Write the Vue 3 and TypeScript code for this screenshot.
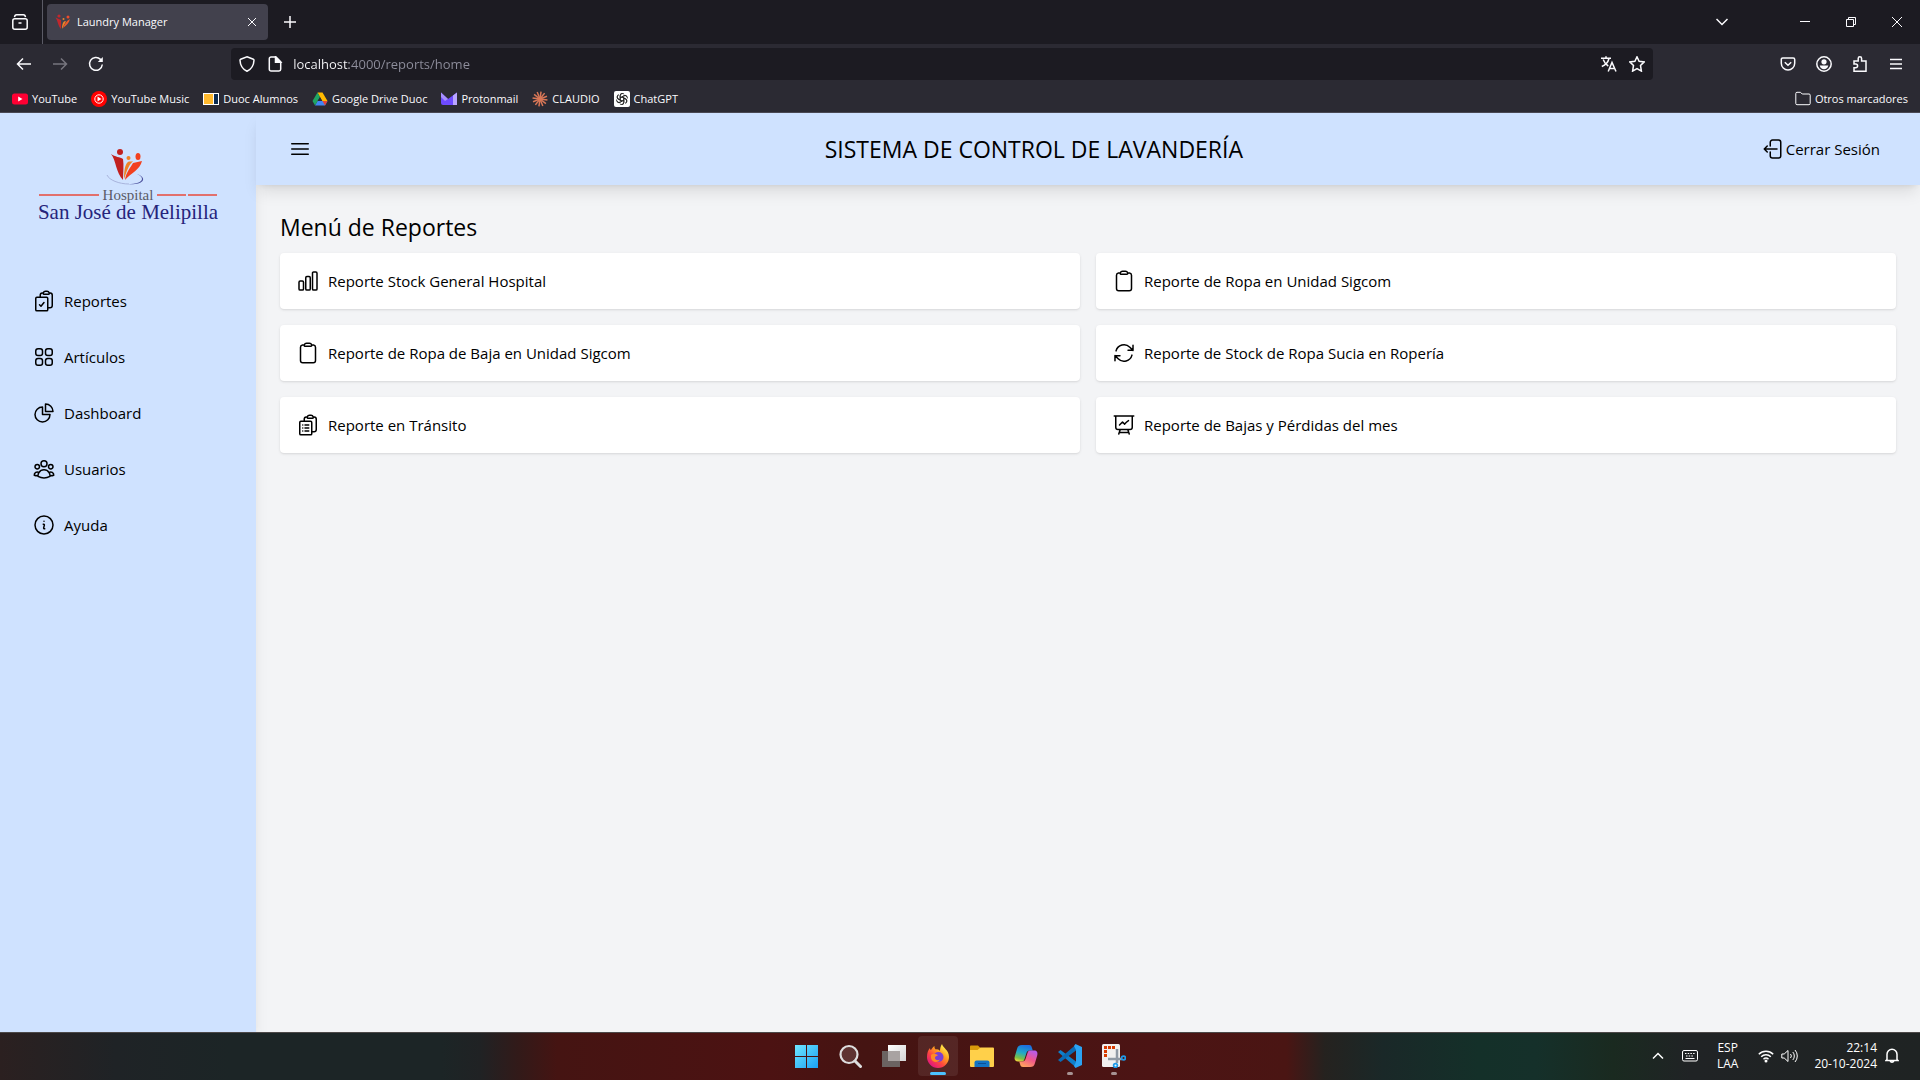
<script setup lang="ts">
import { ref } from 'vue'

interface Entry {
  label: string
  paths: string[]
}

const clipboard =
  'M15.666 3.888A2.25 2.25 0 0 0 13.5 2.25h-3c-1.03 0-1.9.693-2.166 1.638m7.332 0c.055.194.084.4.084.612v0a.75.75 0 0 1-.75.75H9a.75.75 0 0 1-.75-.75v0c0-.212.03-.418.084-.612m7.332 0c.646.049 1.288.11 1.927.184 1.1.128 1.907 1.077 1.907 2.185V19.5a2.25 2.25 0 0 1-2.25 2.25H6.75A2.25 2.25 0 0 1 4.5 19.5V6.257c0-1.108.806-2.057 1.907-2.185a48.208 48.208 0 0 1 1.927-.184'

const navigation: Entry[] = [
  {
    label: 'Reportes',
    paths: [
      'M11.35 3.836c-.065.21-.1.433-.1.664 0 .414.336.75.75.75h4.5a.75.75 0 0 0 .75-.75 2.25 2.25 0 0 0-.1-.664m-5.8 0A2.251 2.251 0 0 1 13.5 2.25H15c1.012 0 1.867.668 2.15 1.586m-5.8 0c-.376.023-.75.05-1.124.08C9.095 4.01 8.25 4.973 8.25 6.108V8.25m8.9-4.414c.376.023.75.05 1.124.08 1.131.094 1.976 1.057 1.976 2.192V16.5A2.25 2.25 0 0 1 18 18.75h-2.25m-7.5-10.5H4.875c-.621 0-1.125.504-1.125 1.125v11.25c0 .621.504 1.125 1.125 1.125h9.75c.621 0 1.125-.504 1.125-1.125V18.75m-7.5-10.5h6.375c.621 0 1.125.504 1.125 1.125v9.375m-8.25-3 1.5 1.5 3-3.75',
    ],
  },
  {
    label: 'Artículos',
    paths: [
      'M3.75 6A2.25 2.25 0 0 1 6 3.75h2.25A2.25 2.25 0 0 1 10.5 6v2.25a2.25 2.25 0 0 1-2.25 2.25H6a2.25 2.25 0 0 1-2.25-2.25V6ZM3.75 15.75A2.25 2.25 0 0 1 6 13.5h2.25a2.25 2.25 0 0 1 2.25 2.25V18a2.25 2.25 0 0 1-2.25 2.25H6A2.25 2.25 0 0 1 3.75 18v-2.25ZM13.5 6a2.25 2.25 0 0 1 2.25-2.25H18A2.25 2.25 0 0 1 20.25 6v2.25A2.25 2.25 0 0 1 18 10.5h-2.25a2.25 2.25 0 0 1-2.25-2.25V6ZM13.5 15.75a2.25 2.25 0 0 1 2.25-2.25H18a2.25 2.25 0 0 1 2.25 2.25V18A2.25 2.25 0 0 1 18 20.25h-2.25A2.25 2.25 0 0 1 13.5 18v-2.25Z',
    ],
  },
  {
    label: 'Dashboard',
    paths: ['M10.5 6a7.5 7.5 0 1 0 7.5 7.5h-7.5V6Z', 'M13.5 10.5H21A7.5 7.5 0 0 0 13.5 3v7.5Z'],
  },
  {
    label: 'Usuarios',
    paths: [
      'M18 18.72a9.094 9.094 0 0 0 3.741-.479 3 3 0 0 0-4.682-2.72m.94 3.198.001.031c0 .225-.012.447-.037.666A11.944 11.944 0 0 1 12 21c-2.17 0-4.207-.576-5.963-1.584A6.062 6.062 0 0 1 6 18.719m12 0a5.971 5.971 0 0 0-.941-3.197m0 0A5.995 5.995 0 0 0 12 12.75a5.995 5.995 0 0 0-5.058 2.772m0 0a3 3 0 0 0-4.681 2.72 8.986 8.986 0 0 0 3.74.477m.94-3.197a5.971 5.971 0 0 0-.94 3.197M15 6.75a3 3 0 1 1-6 0 3 3 0 0 1 6 0Zm6 3a2.25 2.25 0 1 1-4.5 0 2.25 2.25 0 0 1 4.5 0Zm-13.5 0a2.25 2.25 0 1 1-4.5 0 2.25 2.25 0 0 1 4.5 0Z',
    ],
  },
  {
    label: 'Ayuda',
    paths: [
      'm11.25 11.25.041-.02a.75.75 0 0 1 1.063.852l-.708 2.836a.75.75 0 0 0 1.063.853l.041-.021M21 12a9 9 0 1 1-18 0 9 9 0 0 1 18 0Zm-9-3.75h.008v.008H12V8.25Z',
    ],
  },
]

const reports: Entry[] = [
  {
    label: 'Reporte Stock General Hospital',
    paths: [
      'M3 13.125C3 12.504 3.504 12 4.125 12h2.25c.621 0 1.125.504 1.125 1.125v6.75C7.5 20.496 6.996 21 6.375 21h-2.25A1.125 1.125 0 0 1 3 19.875v-6.75ZM9.75 8.625c0-.621.504-1.125 1.125-1.125h2.25c.621 0 1.125.504 1.125 1.125v11.25c0 .621-.504 1.125-1.125 1.125h-2.25a1.125 1.125 0 0 1-1.125-1.125V8.625ZM16.5 4.125c0-.621.504-1.125 1.125-1.125h2.25C20.496 3 21 3.504 21 4.125v15.75c0 .621-.504 1.125-1.125 1.125h-2.25a1.125 1.125 0 0 1-1.125-1.125V4.125Z',
    ],
  },
  { label: 'Reporte de Ropa en Unidad Sigcom', paths: [clipboard] },
  { label: 'Reporte de Ropa de Baja en Unidad Sigcom', paths: [clipboard] },
  {
    label: 'Reporte de Stock de Ropa Sucia en Ropería',
    paths: [
      'M16.023 9.348h4.992v-.001M2.985 19.644v-4.992m0 0h4.992m-4.993 0 3.181 3.183a8.25 8.25 0 0 0 13.803-3.7M4.031 9.865a8.25 8.25 0 0 1 13.803-3.7l3.181 3.182m0-4.991v4.99',
    ],
  },
  {
    label: 'Reporte en Tránsito',
    paths: [
      'M9 12h3.75M9 15h3.75M9 18h3.75m3 .75H18a2.25 2.25 0 0 0 2.25-2.25V6.108c0-1.135-.845-2.098-1.976-2.192a48.424 48.424 0 0 0-1.123-.08m-5.801 0c-.065.21-.1.433-.1.664 0 .414.336.75.75.75h4.5a.75.75 0 0 0 .75-.75 2.25 2.25 0 0 0-.1-.664m-5.8 0A2.251 2.251 0 0 1 13.5 2.25H15c1.012 0 1.867.668 2.15 1.586m-5.8 0c-.376.023-.75.05-1.124.08C9.095 4.01 8.25 4.973 8.25 6.108V8.25m0 0H4.875c-.621 0-1.125.504-1.125 1.125v11.25c0 .621.504 1.125 1.125 1.125h9.75c.621 0 1.125-.504 1.125-1.125V9.375c0-.621-.504-1.125-1.125-1.125H8.25ZM6.75 12h.008v.008H6.75V12Zm0 3h.008v.008H6.75V15Zm0 3h.008v.008H6.75V18Z',
    ],
  },
  {
    label: 'Reporte de Bajas y Pérdidas del mes',
    paths: [
      'M3.75 3v11.25A2.25 2.25 0 0 0 6 16.5h2.25M3.75 3h-1.5m1.5 0h16.5m0 0h1.5m-1.5 0v11.25A2.25 2.25 0 0 1 18 16.5h-2.25m-7.5 0h7.5m-7.5 0-1 3m8.5-3 1 3m0 0 .5 1.5m-.5-1.5h-9.5m0 0-.5 1.5m.75-9 3-3 2.148 2.148A12.061 12.061 0 0 1 16.5 7.605',
    ],
  },
]

const address = ref('localhost:4000/reports/home')
const rays = Array.from({ length: 12 }, (_, i) => i * 30)
const petals = [0, 60, 120, 180, 240, 300]
</script>

<template>
  <div class="screen">
    <div class="tabstrip">
      <button class="recent" aria-label="Vista de Firefox">
        <svg width="16" height="16" viewBox="0 0 16 16" class="line">
          <path d="M2.500 3.200C2.700 1.600 3.400.8 4.600.8h6.800c1.200 0 1.900.8 2.100 2.400M6.500 9h3" />
          <rect x=".8" y="4.800" width="14.400" height="10.400" rx="2" />
        </svg>
      </button>
      <div class="tab">
        <svg width="16" height="16" viewBox="0 0 16 16">
          <path d="M.5 3.500 6 6v9C3 12 3 7 .5 3.500Z" fill="#c1272d" />
          <circle cx="4" cy="2" r="1.600" fill="#c1272d" />
          <path d="M7 15c0-4 .5-7 3-8l1 .5C9.500 10 8.500 12 7 15Z" fill="#f08326" />
          <path d="M8 14c1-3 3-7 7-9-1 4-3.500 6-7 9Z" fill="#ee5a2b" />
          <circle cx="8.500" cy="5" r="1" fill="#f08326" />
          <circle cx="13" cy="3" r="1.500" fill="#ee4b2b" />
        </svg>
        <span class="tab-title">Laundry Manager</span>
        <button class="tab-close" aria-label="Cerrar pestaña">
          <svg width="10" height="10" viewBox="0 0 10 10" class="line thin"><path d="m1 1 8 8m0-8-8 8" /></svg>
        </button>
      </div>
      <button class="square" aria-label="Nueva pestaña">
        <svg width="12" height="12" viewBox="0 0 12 12" class="line"><path d="M6 0v12M0 6h12" /></svg>
      </button>
      <div class="window-controls">
        <button class="list-tabs" aria-label="Listar pestañas">
          <svg width="12" height="8" viewBox="0 0 12 8" class="line"><path d="m.5 1 5.500 5.500L11.500 1" /></svg>
        </button>
        <button class="caption" aria-label="Minimizar">
          <svg width="10" height="10" viewBox="0 0 10 10" class="line thin"><path d="M0 4.500h10" /></svg>
        </button>
        <button class="caption" aria-label="Restaurar">
          <svg width="10" height="10" viewBox="0 0 10 10" class="line thin">
            <path d="M.5 2.500h7v7h-7zM2.500 2.500v-2h7v7h-2" />
          </svg>
        </button>
        <button class="caption" aria-label="Cerrar">
          <svg width="10" height="10" viewBox="0 0 10 10" class="line thin"><path d="m0 0 10 10M10 0 0 10" /></svg>
        </button>
      </div>
    </div>

    <div class="toolbar">
      <div class="tool-group">
        <button class="square" aria-label="Atrás">
          <svg width="16" height="16" viewBox="0 0 16 16" class="line"><path d="M15 8H1.500M7 2.500 1.500 8 7 13.500" /></svg>
        </button>
        <button class="square" aria-label="Adelante" disabled>
          <svg width="16" height="16" viewBox="0 0 16 16" class="line"><path d="M1 8h13.500M9 2.500 14.500 8 9 13.500" /></svg>
        </button>
        <button class="square" aria-label="Recargar">
          <svg width="16" height="16" viewBox="0 0 16 16" class="line">
            <path d="M14.300 8.500A6.400 6.400 0 1 1 12.500 3.400l1 1" />
            <path d="M14.800 1v5h-5Z" fill="currentColor" stroke="none" />
          </svg>
        </button>
      </div>
      <div class="spring"></div>
      <div class="urlbar">
        <svg width="16" height="16" viewBox="0 0 16 16" class="line">
          <path d="M8 .8 14.400 3.200c.5.2.6.5.600 1-.2 4.800-2.400 8.800-7 11-4.600-2.200-6.800-6.200-7-11 0-.5.100-.8.600-1Z" />
        </svg>
        <svg width="16" height="16" viewBox="0 0 16 16" class="line page-icon">
          <path d="M9 1H4a1.700 1.700 0 0 0-1.700 1.700v10.600A1.700 1.700 0 0 0 4 15h8a1.700 1.700 0 0 0 1.700-1.700V5.700Z" />
          <path d="M8.500 1v5.200h5.200Z" fill="currentColor" />
        </svg>
        <input v-model="address" class="address" type="text" aria-label="Dirección" spellcheck="false" />
        <button class="url-action" aria-label="Traducir esta página">
          <svg width="16" height="16" viewBox="0 0 16 16" class="line">
            <path d="M0 2.300h10M5 .2v2M8 2.500C7 6.500 4.500 9 .8 10.500M2.200 3.500C3.300 6.500 5 8.700 7.300 10" />
            <path d="m7.200 15.500 3.800-9 4 9M8.600 12.500h5" />
          </svg>
        </button>
        <button class="url-action" aria-label="Añadir a marcadores">
          <svg width="16" height="16" viewBox="0 0 16 16" class="line">
            <path d="m8 .8 2.100 4.500 5.100.6-3.700 3.500.9 5.700L8 12.500l-4.400 2.600.9-5.700L.8 5.900l5.100-.6Z" />
          </svg>
        </button>
      </div>
      <div class="spring"></div>
      <div class="tool-group">
        <button class="square" aria-label="Pocket">
          <svg width="16" height="16" viewBox="0 0 16 16" class="line">
            <path d="M2.800 2h10.400c1 0 1.500.5 1.500 1.500v3.800a6.700 6.700 0 0 1-13.400 0V3.500C1.300 2.500 1.800 2 2.800 2Z" />
            <path d="m4.800 6.300 3.200 3 3.200-3" />
          </svg>
        </button>
        <button class="square" aria-label="Cuenta">
          <svg width="16" height="16" viewBox="0 0 16 16" class="line">
            <circle cx="8" cy="8" r="7.200" />
            <circle cx="8" cy="5.800" r="2.600" fill="currentColor" stroke="none" />
            <path d="M3.700 9.500h8.600c-.6 2.500-2.200 3.700-4.300 3.700s-3.700-1.200-4.300-3.700Z" fill="currentColor" stroke="none" />
          </svg>
        </button>
        <button class="square" aria-label="Extensiones">
          <svg width="16" height="16" viewBox="0 0 16 16" class="line">
            <path
              d="M2 8V5h4.200V2.500a1.700 1.700 0 0 1 3.400 0V5H14v10.200H2v-3.400h1.700a1.900 1.900 0 0 0 0-3.800Z"
            />
          </svg>
        </button>
        <button class="square" aria-label="Menú de la aplicación">
          <svg width="12" height="12" viewBox="0 0 12 12" class="line">
            <path d="M0 1.500h12M0 6h12M0 10.500h12" />
          </svg>
        </button>
      </div>
    </div>

    <nav class="bookmarks" aria-label="Marcadores">
      <a href="#">
        <svg width="16" height="16" viewBox="0 0 16 16">
          <rect y="2.500" width="16" height="11" rx="2.500" fill="#ff0033" />
          <path d="m6.200 5.500 4.300 2.500-4.300 2.500Z" fill="#fff" />
        </svg>
        YouTube
      </a>
      <a href="#">
        <svg width="16" height="16" viewBox="0 0 16 16">
          <circle cx="8" cy="8" r="8" fill="#f00" />
          <circle cx="8" cy="8" r="4.200" fill="none" stroke="#fff" />
          <path d="m6.500 5.500 4 2.500-4 2.500Z" fill="#fff" />
        </svg>
        YouTube Music
      </a>
      <a href="#">
        <svg width="16" height="16" viewBox="0 0 16 16">
          <path d="M0 2h16v12H0z" fill="#fff" />
          <path d="M1 3h9v10H1z" fill="#ffb92e" />
          <path d="M11 3h4v10h-4z" fill="#0b2c52" />
        </svg>
        Duoc Alumnos
      </a>
      <a href="#">
        <svg width="16" height="16" viewBox="0 0 16 16">
          <path d="M10.500 1.500 15.500 10H10L5.500 1.500Z" fill="#ffba00" />
          <path d="M15.500 10 13 14.500H3L5.500 10Z" fill="#4285f4" />
          <path d="M.5 10 3 14.500 8 6 5.500 1.500Z" fill="#1fa463" />
          <path d="M15.500 10 13 14.500 10.500 10Z" fill="#ea4335" />
          <path d="M8 6 10.300 10H5.700Z" fill="#2b2a33" />
        </svg>
        Google Drive Duoc
      </a>
      <a href="#">
        <svg width="16" height="16" viewBox="0 0 16 16">
          <path d="M0 1.500 7 8 16 1.500V14H2a2 2 0 0 1-2-2Z" fill="#6d4aff" />
          <path d="M16 1.500V14h-4V4.500Z" fill="#b9a5ff" />
          <path d="M0 1.500 7 8 4 10 0 6Z" fill="#a78fff" />
        </svg>
        Protonmail
      </a>
      <a href="#">
        <svg width="16" height="16" viewBox="0 0 16 16" stroke="#d97757" stroke-width="1.500">
          <path v-for="angle in rays" :key="angle" d="M8 8V.5" :transform="`rotate(${angle + 8} 8 8)`" />
        </svg>
        CLAUDIO
      </a>
      <a href="#">
        <svg width="16" height="16" viewBox="0 0 16 16">
          <rect width="16" height="16" rx="2" fill="#fff" />
          <g fill="none" stroke="#222" stroke-width=".9">
            <path
              v-for="angle in petals"
              :key="angle"
              d="M6.200 9V4.700a2.300 2.300 0 0 1 4-1.500M6.200 6.900 9.800 4.800a2.300 2.300 0 0 1 3 .6"
              :transform="`rotate(${angle} 8 8)`"
            />
          </g>
        </svg>
        ChatGPT
      </a>
      <a href="#" class="others">
        <svg width="16" height="16" viewBox="0 0 16 16" class="line thin">
          <path d="M.8 12.500v-10c0-.8.400-1.200 1.200-1.200h3.500L7.200 3H14c.8 0 1.200.4 1.200 1.200v8.300c0 .8-.4 1.200-1.200 1.200H2c-.8 0-1.200-.4-1.200-1.200Z" />
        </svg>
        Otros marcadores
      </a>
    </nav>

    <div class="app">
      <aside class="sidebar">
        <div class="logo">
          <svg class="emblem" width="40" height="38" viewBox="0 0 40 38">
            <path d="M1 27c2 5 12 9 22 9" fill="none" stroke="#a9b4dc" stroke-width="1" />
            <path d="M31 26c9 3 8 9-2 10-4 .4-7 0-7 0 8 0 14-2 14-5 0-2-2-4-5-5Z" fill="#4a4f9c" />
            <circle cx="14" cy="4" r="3" fill="#c1201f" />
            <path d="M5 6c4 3 9 3 12 5 1 6 0 14 0 21C10 25 10 12 5 6Z" fill="#c1201f" />
            <circle cx="22.500" cy="10" r="2" fill="#f08326" />
            <path d="M18 31c0-8 1-15 4-17 1-1 3 0 5-1-5 5-6 10-9 18Z" fill="#f08326" />
            <ellipse cx="32" cy="8.500" rx="2.500" ry="3.500" fill="#f2401f" />
            <path d="M19 32c1-8 6-13 8-17 3-1 6-1 9-2-2 9-11 12-17 19Z" fill="#f2401f" />
          </svg>
          <div class="logo-line">
            <i></i>
            <span>Hospital</span>
            <i class="split"></i>
          </div>
          <div class="logo-name">San José de Melipilla</div>
        </div>
        <nav class="menu" aria-label="Principal">
          <a v-for="item in navigation" :key="item.label" href="#">
            <svg width="24" height="24" viewBox="0 0 24 24" class="outline">
              <path v-for="d in item.paths" :key="d" :d="d" />
            </svg>
            {{ item.label }}
          </a>
        </nav>
      </aside>

      <div class="content">
        <header class="header">
          <button class="burger" aria-label="Contraer menú">
            <svg width="24" height="24" viewBox="0 0 24 24" class="outline">
              <path d="M3.750 6.750h16.500M3.750 12h16.500m-16.500 5.250h16.500" />
            </svg>
          </button>
          <h1>SISTEMA DE CONTROL DE LAVANDERÍA</h1>
          <button class="logout">
            <svg width="24" height="24" viewBox="0 0 24 24" class="outline">
              <path
                d="M8.250 9V5.250A2.250 2.250 0 0 1 10.500 3h6a2.250 2.250 0 0 1 2.250 2.250v13.500A2.250 2.250 0 0 1 16.500 21h-6a2.250 2.250 0 0 1-2.250-2.250V15m-3 0-3-3m0 0 3-3m-3 3H15"
              />
            </svg>
            Cerrar Sesión
          </button>
        </header>
        <main class="main">
          <h2>Menú de Reportes</h2>
          <div class="cards">
            <a v-for="report in reports" :key="report.label" href="#" class="card">
              <svg width="24" height="24" viewBox="0 0 24 24" class="outline">
                <path v-for="d in report.paths" :key="d" :d="d" />
              </svg>
              {{ report.label }}
            </a>
          </div>
        </main>
      </div>
    </div>

    <footer class="taskbar">
      <div class="pinned">
        <button aria-label="Inicio">
          <svg width="24" height="24" viewBox="0 0 24 24">
            <defs>
              <linearGradient id="win" x1="0" y1="0" x2="1" y2="1" gradientUnits="objectBoundingBox">
                <stop offset="0" stop-color="#6fe6ff" />
                <stop offset="1" stop-color="#1aa0f5" />
              </linearGradient>
            </defs>
            <path d="M1 1h11v11H1zM13 1h11v11H13zM1 13h11v11H1zM13 13h11v11H13z" fill="url(#win)" />
          </svg>
        </button>
        <button aria-label="Buscar">
          <svg width="24" height="24" viewBox="0 0 24 24" fill="none" stroke="#dedede">
            <circle cx="11" cy="10.500" r="8.500" stroke-width="2.200" fill="#ffffff22" />
            <path d="m17 17 5.500 5.500" stroke-width="3" stroke-linecap="round" />
          </svg>
        </button>
        <button aria-label="Vista de tareas">
          <svg width="24" height="24" viewBox="0 0 24 24">
            <defs>
              <linearGradient id="tv" x1="0" y1="0" x2="1" y2="1">
                <stop offset="0" stop-color="#fff" />
                <stop offset="1" stop-color="#d4d4d4" />
              </linearGradient>
            </defs>
            <path d="M6 1h18v16H6z" fill="url(#tv)" />
            <path d="M0 7h18v16H0z" fill="#6b6361" />
            <path d="M6 7h12v10H6z" fill="#a9a3a2" />
          </svg>
        </button>
        <button class="active" aria-label="Firefox">
          <svg width="24" height="24" viewBox="0 0 24 24">
            <defs>
              <linearGradient id="fx" x1=".85" y1=".1" x2=".2" y2=".9">
                <stop offset="0" stop-color="#fff44f" />
                <stop offset=".35" stop-color="#ffa020" />
                <stop offset=".65" stop-color="#ff4a3d" />
                <stop offset="1" stop-color="#e3187b" />
              </linearGradient>
            </defs>
            <path
              d="M16 0c1 4 7 6 7 13a11 11 0 0 1-22 0c0-4 1-7 3-9 0 1 .5 2 1 2 1-2 2-3 3.500-4-.3 1.500.5 3 1.500 3.500 2-.5 3 .5 4 1.500C14 5 14.500 2 16 0Z"
              fill="url(#fx)"
            />
            <circle cx="12.500" cy="13" r="5" fill="#7b3fd4" />
            <path d="M5 11c2-2 4-1 7 0-1 1.500-3 1-3 3s3 3 5 1.500c-2 4-8 3-9-1.500Z" fill="#ff8a25" />
          </svg>
        </button>
        <button aria-label="Explorador de archivos">
          <svg width="24" height="24" viewBox="0 0 24 24">
            <path d="M0 2.500C0 2 .5 1.500 1 1.500h7L10.500 4 8 7H0Z" fill="#d99a0b" />
            <path d="M0 6h7.500l3-2.500H23a1 1 0 0 1 1 1V22a1 1 0 0 1-1 1H1a1 1 0 0 1-1-1Z" fill="#ffd04a" />
            <path d="M4.500 23v-4.500a2 2 0 0 1 2-2h11a2 2 0 0 1 2 2V23Z" fill="#1273c4" />
            <path d="M8 19.500h8" stroke="#0b4f96" />
          </svg>
        </button>
        <button aria-label="Copilot">
          <svg width="24" height="24" viewBox="0 0 24 24">
            <defs>
              <linearGradient id="cpa" x1=".5" y1="0" x2=".2" y2="1">
                <stop offset="0" stop-color="#1d6fe0" />
                <stop offset=".45" stop-color="#1fa8c9" />
                <stop offset=".8" stop-color="#7bc043" />
                <stop offset="1" stop-color="#f4d83c" />
              </linearGradient>
              <linearGradient id="cpb" x1=".8" y1="0" x2=".3" y2="1">
                <stop offset="0" stop-color="#b35cf0" />
                <stop offset=".5" stop-color="#f0568c" />
                <stop offset="1" stop-color="#ffa25e" />
              </linearGradient>
            </defs>
            <path d="M8 1h7c2 0 2.500 1 3 3l.8 2.500h-3c-2 0-3 1-3.500 3L10.500 15c-.5 2-1.500 2.500-3 2.500H4c-3 0-4-2-3.200-5L3 5c.9-3 2-4 5-4Z" fill="url(#cpa)" />
            <path d="M16 23H9c-2 0-2.500-1-3-3l-.8-2.500h3c2 0 3-1 3.500-3L13.500 9c.5-2 1.500-2.500 3-2.500H20c3 0 4 2 3.200 5L21 19c-.9 3-2 4-5 4Z" fill="url(#cpb)" />
          </svg>
        </button>
        <button class="running" aria-label="Visual Studio Code">
          <svg width="24" height="24" viewBox="0 0 24 24">
            <path d="m0 8 2.500-2L18 17.500v6L0 8Z" fill="#0f7fca" />
            <path d="m0 16 2.500 2L18 6.500v-6L0 16Z" fill="#0a6bb5" />
            <path d="M17.500 0 24 3v18l-6.500 3L16 22l2-4V6l-2-4Z" fill="#2ba3f2" />
          </svg>
        </button>
        <button class="running" aria-label="Recortes">
          <svg width="24" height="24" viewBox="0 0 24 24">
            <rect width="18" height="23" rx="1.500" fill="#f0f0f0" />
            <path d="M3.500 13V3.500H14" fill="none" stroke="#d83b01" stroke-width="3" stroke-dasharray="3 1" />
            <path d="M15 5v14M6 15h14" stroke="#8f9aa6" stroke-width="2.500" />
            <circle cx="21.500" cy="14" r="1.900" fill="none" stroke="#1e9be9" stroke-width="1.700" />
            <circle cx="13.500" cy="21.500" r="1.900" fill="none" stroke="#1e9be9" stroke-width="1.700" />
          </svg>
        </button>
      </div>
      <div class="tray">
        <button aria-label="Mostrar iconos ocultos">
          <svg width="12" height="8" viewBox="0 0 12 8" class="line"><path d="M1 6.500 6 1.500l5 5" /></svg>
        </button>
        <button class="keyboard" aria-label="Teclado táctil">
          <svg width="16" height="12" viewBox="0 0 16 12" class="line thin">
            <rect x=".5" y=".5" width="15" height="10.500" rx="1.500" />
            <path d="M3 3.500h10M4 6h8" stroke-dasharray="1.500 1.200" />
            <path d="M3.500 8.500h9" />
          </svg>
        </button>
        <button class="lang">ESP<br />LAA</button>
        <button class="status" aria-label="Red y volumen">
          <svg width="16" height="14" viewBox="0 0 16 14" class="line">
            <path d="M.8 5.200a10.200 10.200 0 0 1 14.400 0M3.200 7.800a6.800 6.800 0 0 1 9.600 0M5.500 10.200a3.600 3.600 0 0 1 5 0" />
            <circle cx="8" cy="12" r="1.500" fill="currentColor" stroke="none" />
          </svg>
          <svg width="17" height="14" viewBox="0 0 17 14" class="line thin">
            <path d="M.8 5v4h2.400L7 12.500v-11L3.200 5ZM9.500 5a3 3 0 0 1 0 4M11.800 3a6 6 0 0 1 0 8M14 1a9 9 0 0 1 0 12" />
          </svg>
        </button>
        <button class="clock">22:14<br />20-10-2024</button>
        <button class="bell" aria-label="Notificaciones">
          <svg width="14" height="16" viewBox="0 0 14 16" class="line">
            <path d="M2 11.500V6.200a5 5 0 0 1 10 0v5.300l1 1H1ZM5.200 13a1.900 1.900 0 0 0 3.600 0" />
          </svg>
        </button>
      </div>
    </footer>
  </div>
</template>

<style>
body {
  margin: 0;
}
</style>

<style scoped>
* {
  box-sizing: border-box;
}
.screen {
  display: flex;
  flex-direction: column;
  min-height: 100vh;
  font-family: 'Segoe UI', 'Open Sans', 'Noto Sans', sans-serif;
  font-size: 15px;
  line-height: 24px;
  color: #000;
}
button {
  display: flex;
  align-items: center;
  justify-content: center;
  padding: 0;
  border: 0;
  background: none;
  color: inherit;
  font: inherit;
}
a {
  color: inherit;
  text-decoration: none;
}
svg {
  display: block;
  flex: none;
}
.line {
  fill: none;
  stroke: currentColor;
  stroke-width: 1.5;
}
.thin {
  stroke-width: 1;
}
.outline {
  fill: none;
  stroke: currentColor;
  stroke-width: 1.5;
  stroke-linecap: round;
  stroke-linejoin: round;
}

/* Browser chrome */
.tabstrip,
.toolbar,
.bookmarks {
  display: flex;
  align-items: center;
  color: #fbfbfe;
  font-size: 11px;
  line-height: 16px;
}
.tabstrip {
  height: 44px;
  background: #1c1b22;
}
.recent {
  width: 43px;
  height: 44px;
  padding-right: 2px;
  border-right: 1px solid #5b5b66;
}
.tab {
  display: flex;
  align-items: center;
  gap: 6px;
  width: 221px;
  height: 36px;
  margin: 0 6px 0 4px;
  padding: 0 6px 0 8px;
  border-radius: 4px;
  background: #42414d;
}
.tab-title {
  flex: 1;
}
.tab-close {
  width: 20px;
  height: 20px;
}
.square {
  width: 32px;
  height: 32px;
}
.square:disabled {
  color: #77767f;
}
.window-controls {
  display: flex;
  align-items: center;
  margin-left: auto;
}
.list-tabs {
  width: 32px;
  height: 32px;
  margin-right: 44px;
}
.caption {
  width: 46px;
  height: 44px;
}
.toolbar {
  height: 40px;
  padding: 0 8px;
  background: #2b2a33;
}
.tool-group {
  display: flex;
  gap: 4px;
}
.spring {
  flex: 1 1 2px;
}
.urlbar {
  display: flex;
  flex: 12;
  align-items: center;
  height: 32px;
  padding: 0 8px;
  border-radius: 4px;
  background: #1c1b22;
}
.page-icon {
  margin-left: 12px;
}
.address {
  flex: 1;
  min-width: 0;
  height: 24px;
  margin-left: 10px;
  padding: 0;
  border: 0;
  outline: 0;
  font: 13px/24px 'Segoe UI', 'Open Sans', 'Noto Sans', sans-serif;
  color: #8f8f9d;
  background: linear-gradient(90deg, #fbfbfe 56px, #8f8f9d 56px);
  background-clip: text;
  -webkit-text-fill-color: transparent;
}
.url-action {
  width: 28px;
  height: 28px;
}
.urlbar .url-action:last-child {
  margin-right: -6px;
}
.bookmarks {
  gap: 14px;
  height: 29px;
  padding: 1px 12px 0;
  border-bottom: 1px solid #4a4954;
  background: #2b2a33;
}
.bookmarks a {
  display: flex;
  align-items: center;
  gap: 4px;
  white-space: nowrap;
}
.bookmarks .others {
  margin-left: auto;
}

/* Application */
.app {
  display: flex;
  flex: 1;
  background: #f3f4f6;
}
.sidebar,
.header {
  position: relative;
  background: #cfe2ff;
  box-shadow:
    0 10px 15px -3px rgb(0 0 0 / 10%),
    0 4px 6px -4px rgb(0 0 0 / 10%);
}
.sidebar {
  width: 256px;
  flex: none;
}
.logo {
  display: flex;
  flex-direction: column;
  align-items: center;
  height: 160px;
  padding: 35px 39px 0;
  font-family: 'Liberation Serif', serif;
}
.emblem {
  margin-left: -4px;
}
.logo-line {
  display: flex;
  align-items: center;
  gap: 4px;
  width: 100%;
  font-size: 15px;
  line-height: 18px;
  color: #5a5a66;
}
.logo-line i {
  flex: 1;
  height: 2px;
  background: #e2706c;
}
.logo-line .split {
  background: linear-gradient(90deg, #e2706c 29px, transparent 29px 31px, #e2706c 31px);
}
.logo-name {
  font-size: 21px;
  line-height: 16px;
  white-space: nowrap;
  color: #26247b;
}
.menu a {
  display: flex;
  align-items: center;
  gap: 8px;
  height: 56px;
  padding: 0 32px;
}
.content {
  display: flex;
  flex: 1;
  flex-direction: column;
  min-width: 0;
}
.header {
  display: flex;
  align-items: center;
  justify-content: space-between;
  height: 72px;
  padding: 0 40px 0 32px;
}
.logout {
  padding-left: 6px;
}
h1,
h2 {
  margin: 0;
  font-size: 23px;
  font-weight: 400;
  line-height: 36px;
}
.main {
  padding: 24px;
}
.cards {
  display: grid;
  grid-template-columns: 1fr 1fr;
  gap: 16px;
  margin-top: 8px;
}
.card {
  display: flex;
  align-items: center;
  gap: 8px;
  height: 56px;
  padding: 0 16px;
  border-radius: 4px;
  background: #fff;
  box-shadow:
    0 1px 3px rgb(0 0 0 / 10%),
    0 1px 2px -1px rgb(0 0 0 / 10%);
}

/* Taskbar */
.taskbar {
  position: relative;
  display: grid;
  grid-template-columns: 1fr auto 1fr;
  align-items: center;
  height: 48px;
  padding-bottom: 1px;
  border-top: 1px solid #4c4848;
  background: linear-gradient(
    90deg,
    #2b2020 0%,
    #1f2326 6%,
    #1c2526 12%,
    #1c2526 23%,
    #202224 25%,
    #321a19 27%,
    #451412 29%,
    #4c1212 40%,
    #451412 45%,
    #4c1414 60%,
    #4a1513 67%,
    #25221f 69%,
    #1a2828 72%,
    #143029 77%,
    #15302a 80%,
    #1a2a20 84%,
    #202325 88%,
    #1f2323 100%
  );
  color: #fff;
}
.pinned {
  display: flex;
  grid-column: 2;
  gap: 4px;
}
.pinned button {
  position: relative;
  width: 40px;
  height: 40px;
  border-radius: 4px;
}
.pinned .active {
  background: #ffffff14;
}
.active::after,
.running::after {
  position: absolute;
  bottom: 1px;
  left: 50%;
  width: 16px;
  height: 3px;
  margin-left: -8px;
  border-radius: 2px;
  background: #4cc2ff;
  content: '';
}
.running::after {
  width: 6px;
  margin-left: -3px;
  background: #a79393;
}
.tray {
  display: flex;
  justify-content: flex-end;
  align-items: center;
  padding-right: 21px;
  font-size: 12px;
  line-height: 16px;
}
.keyboard {
  margin: 0 19px 0 18px;
}
.lang {
  text-align: center;
}
.status {
  gap: 7px;
  margin: 0 16px 0 20px;
}
.tray .clock {
  text-align: right;
}
.bell {
  margin-left: 8px;
}
</style>
